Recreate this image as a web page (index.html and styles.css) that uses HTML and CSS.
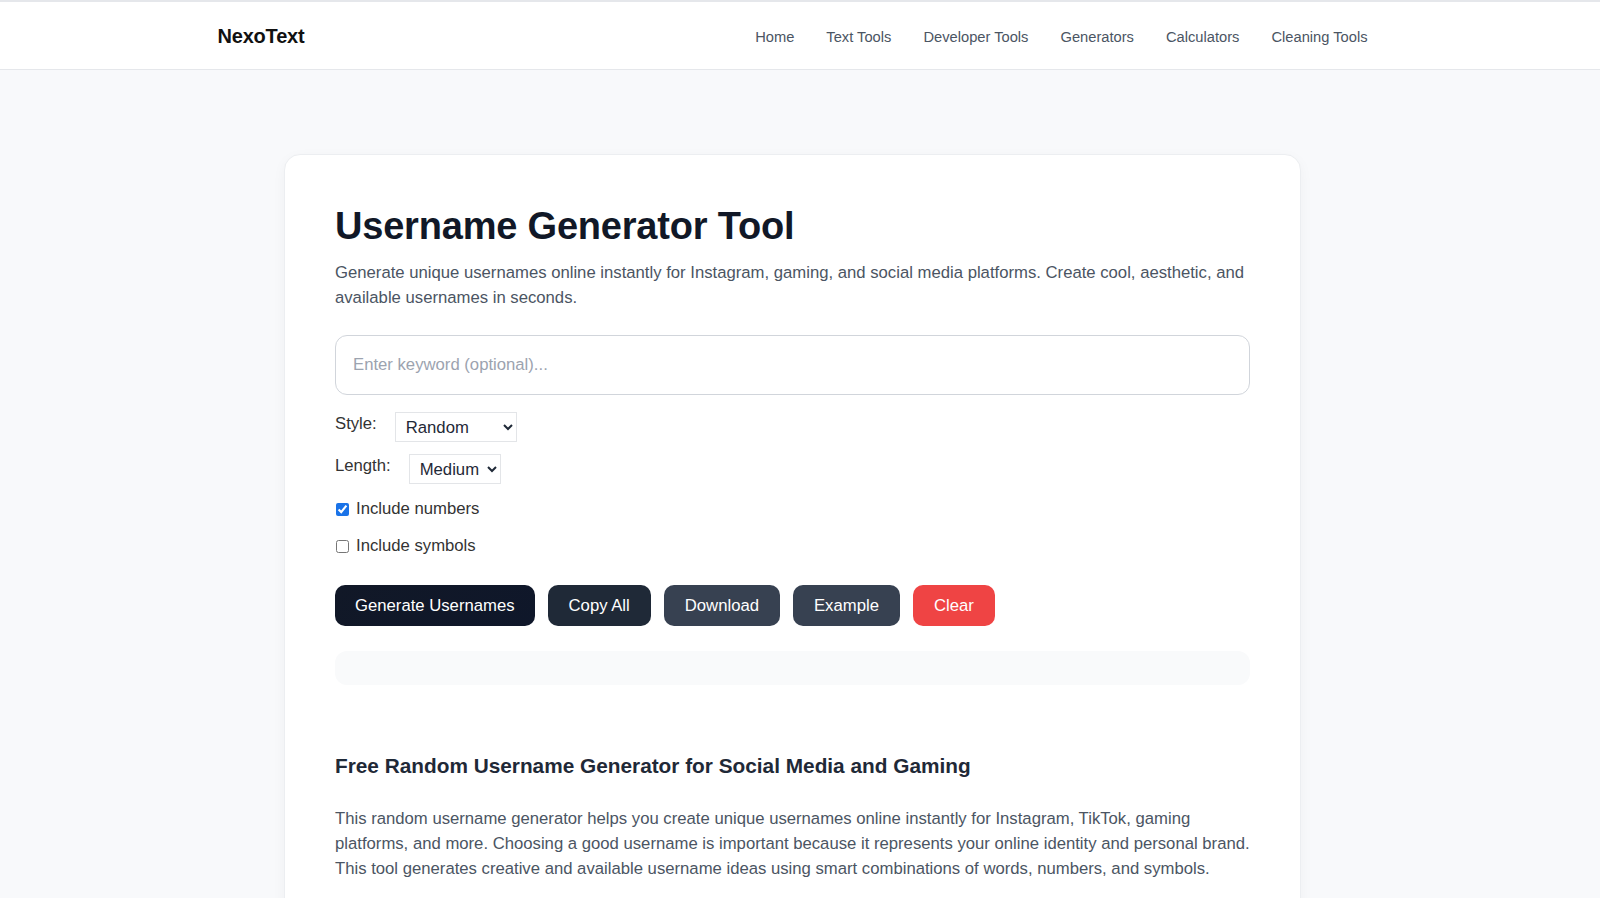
FILE: index.html
```html
<!DOCTYPE html>
<html lang="en">
<head>
    <meta charset="utf-8">
    <title>Username Generator Tool - NexoText</title>
    <link rel="stylesheet" href="styles.css">
</head>
<body>

<header class="site-header">
    <div class="header-inner">
        <a class="logo" href="#">NexoText</a>
        <nav class="main-nav">
            <a href="#">Home</a>
            <a href="#">Text Tools</a>
            <a href="#">Developer Tools</a>
            <a href="#">Generators</a>
            <a href="#">Calculators</a>
            <a href="#">Cleaning Tools</a>
        </nav>
    </div>
</header>

<main class="page">
    <section class="tool-card">
        <h1>Username Generator Tool</h1>
        <p class="intro">Generate unique usernames online instantly for Instagram, gaming, and social media platforms. Create cool, aesthetic, and available usernames in seconds.</p>

        <input id="keyword" class="keyword" type="text" placeholder="Enter keyword (optional)...">

        <div class="option-row first">
            <label for="style">Style:</label>
            <select id="style" class="style-select">
                <option>Random</option>
                <option>Cool</option>
                <option>Aesthetic</option>
                <option>Gaming</option>
            </select>
        </div>

        <div class="option-row">
            <label for="length">Length:</label>
            <select id="length">
                <option>Short</option>
                <option selected>Medium</option>
                <option>Long</option>
            </select>
        </div>

        <label class="check-row"><input type="checkbox" checked> Include numbers</label>
        <label class="check-row"><input type="checkbox"> Include symbols</label>

        <div class="actions">
            <button class="btn btn-primary">Generate Usernames</button>
            <button class="btn btn-copy">Copy All</button>
            <button class="btn btn-dark">Download</button>
            <button class="btn btn-dark">Example</button>
            <button class="btn btn-clear">Clear</button>
        </div>

        <div id="output" class="output"></div>

        <h2>Free Random Username Generator for Social Media and Gaming</h2>
        <p class="content">This random username generator helps you create unique usernames online instantly for Instagram, TikTok, gaming platforms, and more. Choosing a good username is important because it represents your online identity and personal brand. This tool generates creative and available username ideas using smart combinations of words, numbers, and symbols.</p>
    </section>
</main>

</body>
</html>
```

FILE: styles.css
```css
body {
    margin: 0;
    background: #f8f9fb;
    font-family: "Liberation Sans", Arial, sans-serif;
    color: #111827;
}

.site-header {
    background: #fff;
    border-top: 2px solid #e5e7eb;
    border-bottom: 1px solid #e5e7eb;
    padding-right: 15px;
}

.header-inner {
    max-width: 1150px;
    height: 67px;
    padding-top: 2px;
    box-sizing: border-box;
    margin: 0 auto;
    display: flex;
    align-items: center;
    justify-content: space-between;
}

.logo {
    font-size: 20px;
    font-weight: bold;
    color: #111;
    text-decoration: none;
    letter-spacing: -0.2px;
}

.main-nav {
    display: flex;
    gap: 32px;
}

.main-nav a {
    font-size: 14.7px;
    color: #4b5563;
    text-decoration: none;
}

.page {
    padding: 84px 15px 40px 0;
}

.tool-card {
    width: 915px;
    margin: 0 auto;
    padding: 50px;
    background: #fff;
    border: 1px solid #eceef1;
    border-radius: 16px;
    box-shadow: 0 4px 14px rgba(0, 0, 0, 0.04);
}

h1 {
    margin: 0 0 12px;
    font-size: 38px;
    letter-spacing: -0.2px;
    color: #111827;
}

.intro {
    margin: 0 0 25px;
    font-size: 16.7px;
    line-height: 25px;
    color: #4b5563;
}

.keyword {
    display: block;
    box-sizing: border-box;
    width: 100%;
    height: 60px;
    padding: 0 17px;
    border: 1px solid #d1d5db;
    border-radius: 12px;
    font-family: inherit;
    font-size: 16.7px;
    color: #111827;
    outline: none;
}

.keyword::placeholder {
    color: #9ca3af;
}

.option-row {
    display: flex;
    align-items: center;
    gap: 18px;
    margin-top: 12px;
    font-size: 16.7px;
    color: #333;
}

.option-row.first {
    margin-top: 17px;
}

.option-row label {
    position: relative;
    top: -3px;
}

select {
    height: 30px;
    padding: 0 4px 0 6px;
    border: 1px solid #e3e5e8;
    border-radius: 0;
    background: #fff;
    font-family: inherit;
    font-size: 16.7px;
    color: #1f2937;
}

.style-select {
    width: 122px;
}

.check-row {
    display: flex;
    align-items: center;
    gap: 7px;
    margin-top: 15px;
    font-size: 16.7px;
    color: #333;
}

.check-row + .check-row {
    margin-top: 17px;
}

.check-row input {
    width: 13px;
    height: 13px;
    margin: 0 0 0 1px;
    accent-color: #1a73e8;
}

.actions {
    display: flex;
    gap: 13px;
    margin-top: 29px;
}

.btn {
    height: 41px;
    padding: 0 21px;
    border: none;
    border-radius: 10px;
    font-family: inherit;
    font-size: 16.7px;
    color: #fff;
    cursor: pointer;
}

.btn-primary {
    padding: 0 20px;
    background: linear-gradient(135deg, #111827, #0f172a);
}

.btn-copy {
    background: #1f2937;
}

.btn-dark {
    background: #374151;
}

.btn-clear {
    background: #ef4444;
}

.output {
    height: 34px;
    margin-top: 25px;
    background: #f9fafb;
    border-radius: 12px;
}

h2 {
    margin: 69px 0 0;
    font-size: 20.8px;
    color: #1f2937;
}

.content {
    margin: 28px 0 0;
    font-size: 16.7px;
    line-height: 25px;
    color: #4b5563;
}
```
